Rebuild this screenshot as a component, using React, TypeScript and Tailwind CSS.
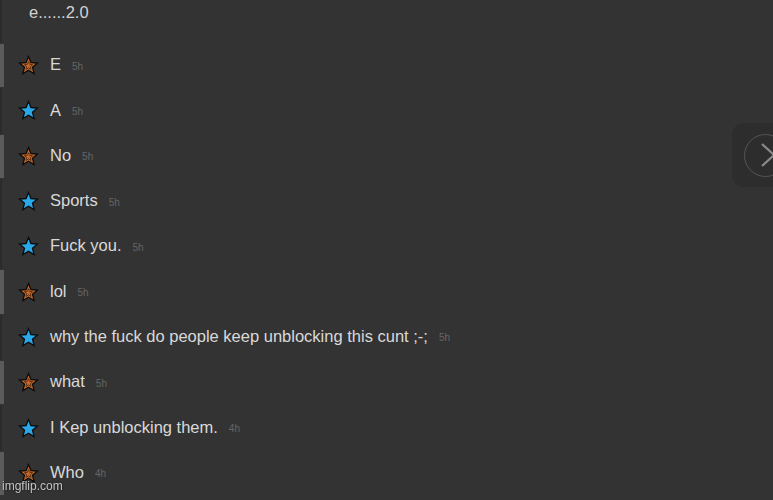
import React from 'react';

interface Message {
  text: string;
  age: string;
  mine: boolean;
}

const messages: Message[] = [
  { text: 'E', age: '5h', mine: false },
  { text: 'A', age: '5h', mine: true },
  { text: 'No', age: '5h', mine: false },
  { text: 'Sports', age: '5h', mine: true },
  { text: 'Fuck you.', age: '5h', mine: true },
  { text: 'lol', age: '5h', mine: false },
  { text: 'why the fuck do people keep unblocking this cunt ;-;', age: '5h', mine: true },
  { text: 'what', age: '5h', mine: false },
  { text: 'I Kep unblocking them.', age: '4h', mine: true },
  { text: 'Who', age: '4h', mine: false },
];

const STAR = 'M12 1.8l2.8 6.8 7.4.6-5.6 4.8 1.8 7.3L12 17.4l-6.4 3.9 1.8-7.3-5.6-4.8 7.4-.6z';
const INNER = 'M12 7.6l1.3 3.1 3.4.3-2.6 2.2.8 3.3L12 14.7l-2.9 1.8.8-3.3-2.6-2.2 3.4-.3z';

const Star: React.FC<{ mine: boolean }> = ({ mine }) =>
  mine ? (
    <svg width="21" height="21" viewBox="0 0 24 24">
      <path d={STAR} fill="#2aa9ea" stroke="#0c0c0c" strokeWidth="1.5" />
    </svg>
  ) : (
    <svg width="21" height="21" viewBox="0 0 24 24">
      <path d={STAR} fill="#c8692c" stroke="#0c0c0c" strokeWidth="1.5" />
      <path d={INNER} fill="none" stroke="#5a2a0c" strokeWidth="1" />
    </svg>
  );

const Row: React.FC<{ msg: Message }> = ({ msg }) => (
  <div className="flex h-[45.3px] items-stretch">
    {msg.mine ? (
      <div className="w-[2px] bg-[#2b2b2b]" />
    ) : (
      <div className="w-[4px] my-[1px] bg-[#5b5b5b]" />
    )}
    <div className={`flex items-center ${msg.mine ? 'pl-[16px]' : 'pl-[14px]'}`}>
      <Star mine={msg.mine} />
      <span className="ml-[11px] -mt-[2px] text-[16.5px] text-[#d9d9d9] whitespace-nowrap">{msg.text}</span>
      <span className="ml-[11px] mt-[1px] text-[10px] text-[#656565]">{msg.age}</span>
    </div>
  </div>
);

export default function App() {
  return (
    <div className="relative w-[773px] h-[500px] overflow-hidden bg-[#333333] font-['Liberation_Sans',Arial,sans-serif]">
      <div className="flex h-[43px]">
        <div className="w-[2px] bg-[#2b2b2b]" />
        <div className="pl-[27px] text-[16.5px] text-[#d2d2d2]">e......2.0</div>
      </div>

      <div className="flex flex-col">
        {messages.map((m, i) => (
          <Row key={i} msg={m} />
        ))}
      </div>

      <div className="absolute left-[732px] top-[123px] w-[60px] h-[64px] rounded-[12px] bg-[#2d2d2d] flex items-center">
        <div className="ml-[12px] w-[43px] h-[43px] rounded-full border border-[#555555] flex items-center justify-center">
          <svg width="24" height="28" viewBox="0 0 24 28" className="ml-[10px]">
            <path d="M3 3l12 11L3 25" fill="none" stroke="#8a8a8a" strokeWidth="2.2" />
          </svg>
        </div>
      </div>

      <div className="absolute left-[2px] bottom-[5px] text-[12px] text-[#c4c4c4] drop-shadow-[0_0_1px_rgba(0,0,0,0.6)]">
        imgflip.com
      </div>
    </div>
  );
}
